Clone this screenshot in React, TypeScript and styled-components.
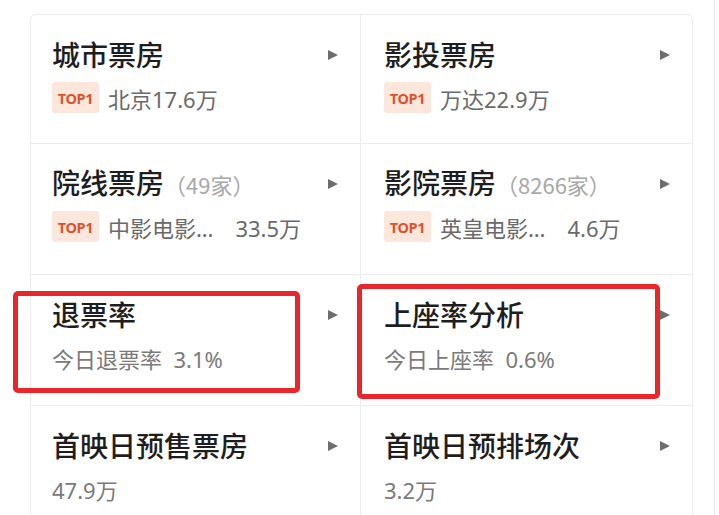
import styled, { createGlobalStyle } from 'styled-components';

const GlobalStyle = createGlobalStyle`
  html, body {
    margin: 0;
    padding: 0;
    background: #ffffff;
    overflow: hidden;
  }
  body {
    font-family: "Noto Sans", "Noto Sans CJK SC", sans-serif;
  }
`;

type Cell = {
  title: string;
  count?: string;
  top?: { name: string; value?: string };
  sub?: string;
  mark?: 'left' | 'right';
};

const ROWS: { height: number; cells: Cell[] }[] = [
  {
    height: 129,
    cells: [
      { title: '城市票房', top: { name: '北京17.6万' } },
      { title: '影投票房', top: { name: '万达22.9万' } },
    ],
  },
  {
    height: 131,
    cells: [
      { title: '院线票房', count: '（49家）', top: { name: '中影电影…', value: '33.5万' } },
      { title: '影院票房', count: '（8266家）', top: { name: '英皇电影…', value: '4.6万' } },
    ],
  },
  {
    height: 131,
    cells: [
      { title: '退票率', sub: '今日退票率  3.1%', mark: 'left' },
      { title: '上座率分析', sub: '今日上座率  0.6%', mark: 'right' },
    ],
  },
  {
    height: 130,
    cells: [
      { title: '首映日预售票房', sub: '47.9万' },
      { title: '首映日预排场次', sub: '3.2万' },
    ],
  },
];

export default function App() {
  return (
    <Page>
      <GlobalStyle />
      <Card>
        {ROWS.map((row, r) =>
          row.cells.map((cell, c) => (
            <CellBox key={`${r}-${c}`} $height={row.height} $right={c === 1} $last={r === ROWS.length - 1}>
              <TitleRow>
                <Title>
                  {cell.title}
                  {cell.count && <Count>{cell.count}</Count>}
                </Title>
                <Arrow />
              </TitleRow>
              <SubRow>
                {cell.top && (
                  <>
                    <Badge>TOP1</Badge>
                    <SubText>{cell.top.name}</SubText>
                    {cell.top.value && <Value>{cell.top.value}</Value>}
                  </>
                )}
                {cell.sub && <SubText $light>{cell.sub}</SubText>}
              </SubRow>
              {cell.mark && <Mark $side={cell.mark} />}
            </CellBox>
          ))
        )}
      </Card>
    </Page>
  );
}

const Page = styled.div`
  width: 715px;
  height: 515px;
  border-right: 1px solid #e4e4e4;
  padding: 14px 0 0 30px;
  box-sizing: border-box;
  overflow: hidden;
`;

const Card = styled.div`
  width: 663px;
  border: 1px solid #ececec;
  border-radius: 6px;
  display: grid;
  grid-template-columns: 330px 331px;
  box-sizing: border-box;
`;

const CellBox = styled.div<{ $height: number; $right: boolean; $last: boolean }>`
  position: relative;
  height: ${(p) => p.$height}px;
  box-sizing: border-box;
  padding: 21px 22px 0 ${(p) => (p.$right ? 23 : 21)}px;
  border-bottom: ${(p) => (p.$last ? 'none' : '1px solid #ededed')};
  border-right: ${(p) => (p.$right ? 'none' : '1px solid #ededed')};
  display: flex;
  flex-direction: column;
`;

const TitleRow = styled.div`
  display: flex;
  align-items: center;
  justify-content: space-between;
  height: 36px;
`;

const Title = styled.div`
  font-family: "Noto Sans CJK SC", sans-serif;
  font-size: 28px;
  line-height: 36px;
  font-weight: 500;
  color: #1e1e22;
  white-space: nowrap;
  display: flex;
  align-items: baseline;
`;

const Count = styled.span`
  font-size: 22px;
  font-weight: 400;
  color: #a8a8a8;
`;

const Arrow = styled.span`
  width: 0;
  height: 0;
  border-top: 5px solid transparent;
  border-bottom: 5px solid transparent;
  border-left: 10px solid #6e6e6e;
  margin-top: 2px;
`;

const SubRow = styled.div`
  display: flex;
  align-items: center;
  height: 31px;
  margin-top: 10px;
`;

const Badge = styled.span`
  display: inline-flex;
  align-items: center;
  justify-content: center;
  width: 47px;
  height: 31px;
  border-radius: 3px;
  background: #fde6db;
  color: #e0522d;
  font-family: "Noto Sans", sans-serif;
  font-weight: 700;
  font-size: 14.5px;
  letter-spacing: -0.3px;
  margin-right: 9px;
`;

const SubText = styled.span<{ $light?: boolean }>`
  font-family: "Noto Sans", "Noto Sans CJK SC", sans-serif;
  font-size: 22px;
  color: ${(p) => (p.$light ? '#7a7a7a' : '#6a6a6a')};
  white-space: pre;
`;

const Value = styled(SubText)`
  margin-left: 22px;
`;

const Mark = styled.div<{ $side: 'left' | 'right' }>`
  position: absolute;
  box-sizing: border-box;
  border: 5px solid #e8262b;
  border-radius: 5px;
  pointer-events: none;
  ${(p) =>
    p.$side === 'left'
      ? 'left: -18px; top: 16px; width: 287px; height: 102px;'
      : 'left: -4px; top: 9px; width: 303px; height: 115px;'}
`;
